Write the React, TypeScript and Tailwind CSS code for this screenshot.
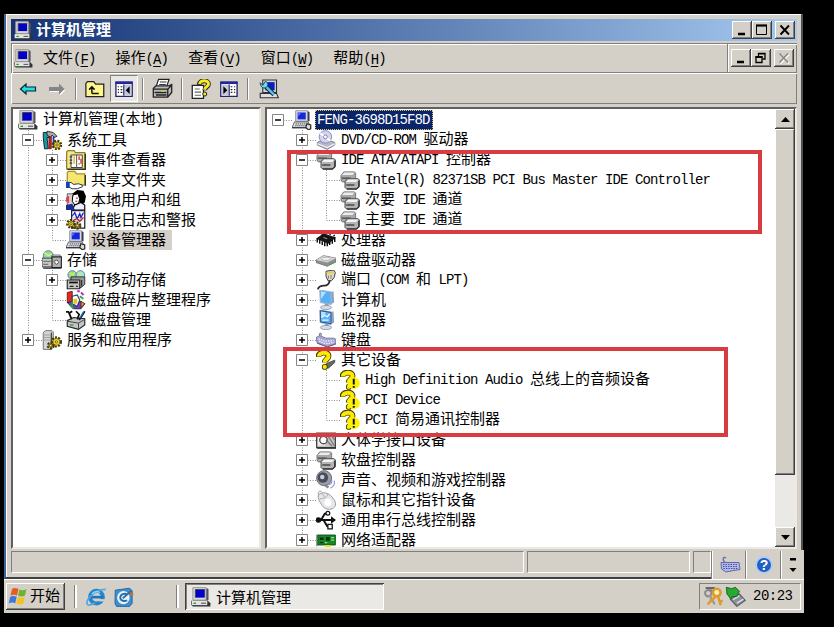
import React from 'react';
import { clsx } from 'clsx';

type Guide = 'blank' | 'line' | 'tee' | 'end' | 'plus' | 'plusEnd' | 'minus' | 'root';

interface TreeItem {
  guides: Guide[];
  icon: React.ReactNode;
  label: string;
  state?: 'selected' | 'inactive';
}

/* ---------- Text ---------- */

// Latin runs use a half-width cell, Chinese characters a full one
function Label({ text, bold }: { text: string; bold?: boolean }) {
  const runs = text.match(/[\x20-\x7e]+|[^\x20-\x7e]+/g) || [];
  return (
    <span className={clsx('whitespace-pre leading-5', bold && 'font-bold')}>
      {runs.map((run, i) =>
        run.charCodeAt(0) < 128 ? (
          <span key={i} className="font-['Liberation_Mono',monospace] text-[14px] tracking-[-0.9px]">
            {run}
          </span>
        ) : (
          <span key={i} className="font-['Noto_Sans_CJK_SC',sans-serif] text-[15px]">
            {run}
          </span>
        )
      )}
    </span>
  );
}

/* ---------- Icons ---------- */

function Icon({ children, size = 20 }: { children: React.ReactNode; size?: number }) {
  return (
    <svg width={size} height={size} viewBox="0 0 16 16" className="shrink-0">
      {children}
    </svg>
  );
}

function ComputerIcon({ size }: { size?: number }) {
  return (
    <Icon size={size}>
      <path d="M2 1h11l1 1v8l-1 1H2z" fill="#555" />
      <path d="M1.5.5h10.5v10H1.5z" fill="#d8d8d8" stroke="#999" strokeWidth=".8" />
      <path d="M3.5 2H11v6.5H3.5z" fill="#0000c8" />
      <path d="M3.5 2H11M3.5 2v6.5" stroke="#445" strokeWidth=".8" />
      <path d="M0 11h13.5l2 2v2.5h-14L0 14z" fill="#333" />
      <path d="M.5 11H13v3.5H.5z" fill="#e4e4e4" />
      <path d="M2 13h2" stroke="#0a0" />
      <path d="M8 13h4" stroke="#666" />
    </Icon>
  );
}

function DeviceManagerIcon() {
  return (
    <Icon>
      <path d="M3 1h10l1 1v7H3z" fill="#334" />
      <path d="M3 .5h9.5V9H3z" fill="#d4d8e8" stroke="#888" strokeWidth=".6" />
      <path d="M4.5 2H11v5.5H4.500z" fill="#1428d8" />
      <path d="M5 2.500h2L5 5z" fill="#6c8cff" />
      <path d="M2 9.500h11l2 4.500H0z" fill="#d8d8e0" stroke="#556" strokeWidth=".7" />
      <path d="M3 11h9M2.500 12.500h9" stroke="#777" strokeDasharray="1 .6" />
      <path d="M0 14.300h12" stroke="#223" strokeWidth=".8" />
      <path d="M12 11l3 1v3l-2 .8-2-1.800z" fill="#ddd" stroke="#222" strokeWidth=".9" />
    </Icon>
  );
}

function Gear({ x, y, r = 2.5 }: { x: number; y: number; r?: number }) {
  return (
    <g>
      <circle cx={x} cy={y} r={r + 0.7} fill="none" stroke="#443800" strokeWidth="2" strokeDasharray="1.5 1" />
      <circle cx={x} cy={y} r={r} fill="#f4d820" stroke="#5c4c00" strokeWidth=".6" />
      <circle cx={x} cy={y} r=".9" fill="#fff" stroke="#443800" strokeWidth=".6" />
    </g>
  );
}

function ToolsIcon() {
  return (
    <Icon>
      <path d="M1 2h5v4H4l1 9H2L1 6z" fill="#10a0a0" stroke="#223" strokeWidth=".8" />
      <path d="M4 1l5 1 3 3-2 1-2-2-1 2-3-2z" fill="#aaa" stroke="#222" strokeWidth=".7" />
      <path d="M5.5 5.500h2V15h-2z" fill="#d02020" stroke="#500" strokeWidth=".5" />
      <path d="M8.5 5H10v9H8.500z" fill="#1838b8" />
      <Gear x={12} y={12} />
    </Icon>
  );
}

function EventIcon() {
  return (
    <Icon>
      <path d="M.5 1.500l1-1h5l1 1.500h7.500v13H.5z" fill="#f4e680" stroke="#8c8030" />
      <path d="M15.500 3v12.500H1" fill="none" stroke="#332" />
      <path d="M4 4h9v10H4z" fill="#fff" stroke="#444" strokeWidth=".8" />
      <path d="M8.500 4v10" stroke="#555" strokeWidth=".8" />
      <path d="M3 5.500h2M3 8h2M3 10.500h2" stroke="#333" />
      <path d="M6.500 5v6" stroke="#c8b400" />
      <path d="M10.500 5v3M12 7v4M10 11h1" stroke="#d02020" />
    </Icon>
  );
}

function ShareIcon() {
  return (
    <Icon>
      <path d="M1 2l1-1h5l1.500 2H15v9H1z" fill="#f6e670" stroke="#a09030" />
      <path d="M15.500 4v8.500" stroke="#332" />
      <path d="M0 10h4l2 1.500 4-.5 3 1v1.500l-4 1.500H5L3 14H0z" fill="#fff" stroke="#335" strokeWidth=".8" />
      <path d="M0 9.500h3V14H0z" fill="#1040c0" />
    </Icon>
  );
}

function UsersIcon() {
  return (
    <Icon>
      <path d="M1 3h6v10H1z" fill="#d8d0c8" stroke="#555" strokeWidth=".7" />
      <path d="M0 6l2.500-1.500v6L0 9z" fill="#e04060" />
      <path d="M5 3l4-3 5 .5L16 5l-1 5-3 2-2-4-2-2z" fill="#000" />
      <path d="M5.500 4l4-1 1.500 4-1 4-3 1L5 9z" fill="#fff" stroke="#000" strokeWidth=".8" />
      <path d="M7 12l5-2 3 2v4H5z" fill="#eef" stroke="#000" strokeWidth=".9" />
      <path d="M0 12l5-1 2 5H0z" fill="#1a2c90" />
      <path d="M8 6.500h1.500M7.500 9h1.500" stroke="#a02020" strokeWidth=".8" />
    </Icon>
  );
}

function PerfIcon() {
  return (
    <Icon>
      <path d="M4.500.5H15v14H4.500z" fill="#fff" stroke="#223" />
      <path d="M5 3.500h9M5 6h9M5 8.500h9M7.500 1v13M11 1v13" stroke="#b8c0d8" strokeWidth=".6" />
      <path d="M5 5l2-3 2 5 2-4 1 3 2-4" fill="none" stroke="#2020c0" />
      <path d="M6 8l3-1 2 2 3-3" fill="none" stroke="#c02020" />
      <Gear x={4} y={11} r={2.200} />
      <Gear x={9} y={12.500} r={1.600} />
    </Icon>
  );
}

function StorageIcon() {
  return (
    <Icon>
      <circle cx="5" cy="4.500" r="4" fill="#8edc9c" stroke="#468" strokeWidth=".6" />
      <path d="M2 2l3 2.500L8 3" stroke="#e8f480" fill="none" />
      <path d="M8 4h6.500v3H8z" fill="#ddd" stroke="#666" strokeWidth=".7" />
      <path d="M0 6.500h9v7H0z" fill="#c8c8c8" stroke="#444" strokeWidth=".8" />
      <path d="M8 5.500h7.500V14H8z" fill="#b0b0b0" stroke="#222" strokeWidth=".9" />
      <path d="M9.500 9l2.500-1 1.500 2-2 1.500z" fill="#fff" stroke="#333" strokeWidth=".6" />
      <path d="M1 9h6M1 11.500h4" stroke="#777" />
      <path d="M1 14.500h14.500" stroke="#222" />
    </Icon>
  );
}

function RemovableIcon() {
  return (
    <Icon>
      <circle cx="5" cy="4" r="3.500" fill="#8edc9c" stroke="#468" strokeWidth=".6" />
      <circle cx="11.500" cy="4" r="3.500" fill="#9ce8d8" stroke="#468" strokeWidth=".6" />
      <path d="M3 2l2 2 2-2M10 2l2 2" stroke="#e8e840" fill="none" />
      <path d="M4 5.500h11v6L12 14H4z" fill="#999" stroke="#333" strokeWidth=".8" />
      <path d="M1 8h10v7H1z" fill="#c4c4c4" stroke="#222" strokeWidth=".9" />
      <path d="M2.500 10h7" stroke="#111" strokeWidth="1.400" />
      <path d="M3 13h3M8 13h1.500" stroke="#222" />
      <path d="M12.500 8v5" stroke="#333" />
    </Icon>
  );
}

function DefragIcon() {
  return (
    <Icon>
      <path d="M1 2l4-1v11l-4-2z" fill="#e02828" stroke="#600" strokeWidth=".6" />
      <path d="M1 10l5 5h6l3-4-4-2H5z" fill="#7838c0" stroke="#223" strokeWidth=".7" />
      <path d="M5 5l4-1 2 4-2 5-4-2z" fill="#fff" stroke="#246" strokeWidth=".9" />
      <path d="M6 7h3v4H6z" fill="#f0c020" />
      <path d="M3 12l3 3M5 9v5" stroke="#20a840" strokeWidth="1.300" />
      <path d="M9 1h2M12 2l2 2" stroke="#c020c0" strokeWidth="1.500" />
      <path d="M11 5l3 2" stroke="#20b040" strokeWidth="1.500" />
      <path d="M12 9l3 2-3 3z" fill="#d8a020" stroke="#421" strokeWidth=".6" />
    </Icon>
  );
}

function DiskMgmtIcon() {
  return (
    <Icon>
      <path d="M1 8.500L6 6l9 1v5l-5 3.500L1 13z" fill="#c4c4c4" stroke="#222" strokeWidth=".9" />
      <path d="M1 9l9 1.500 5-3M10 10.500V15" stroke="#444" fill="none" strokeWidth=".8" />
      <path d="M0 1.500h2.500M5 1L2.500 2.500l2 5" stroke="#111" strokeWidth="1.500" fill="none" />
      <path d="M8 1l2.500 2.500L9 7.500M15 1l-2.500 4-2 3" stroke="#111" strokeWidth="1.400" fill="none" />
      <path d="M14 1.500l-3 5" stroke="#1870d0" />
      <path d="M3 12h3" stroke="#18a030" />
    </Icon>
  );
}

function ServicesIcon() {
  return (
    <Icon>
      <path d="M1 2L3 .5h5l1 1V14l-2 1.500H1z" fill="#d4d4d4" stroke="#777" strokeWidth=".8" />
      <path d="M1.500 4H7M1.500 6H7M1.500 8H7" stroke="#999" strokeWidth=".7" />
      <path d="M7.500 2v13" stroke="#444" />
      <Gear x={11.500} y={9.500} r={2.800} />
      <Gear x={7} y={12.500} r={1.500} />
    </Icon>
  );
}

function DvdIcon() {
  return (
    <Icon>
      <path d="M1 10l6-3 8 3v2l-6 3.500L1 12z" fill="#b4b8c8" stroke="#667" strokeWidth=".6" />
      <circle cx="7.500" cy="5.500" r="5" fill="#d4d4ee" stroke="#8080b0" strokeWidth=".7" />
      <path d="M7.500 5.500l-4-3M7.500 5.500l4 3" stroke="#fff" strokeWidth="1.500" />
      <circle cx="7.500" cy="5.500" r="1.500" fill="#fff" stroke="#668" strokeWidth=".6" />
      <path d="M1 11l8 3 6-3" stroke="#f4f4f8" fill="none" />
    </Icon>
  );
}

function ControllerIcon() {
  return (
    <Icon>
      <path d="M.8 4.500L3 1.500h8.500l1 1V8l-2 1.500H2L.8 8.500z" fill="#a8a8a8" stroke="#6c6c6c" strokeWidth=".7" />
      <path d="M1.500 4l2-2h8l-1.500 2z" fill="#ececec" />
      <path d="M1.500 6.500h7" stroke="#444" />
      <path d="M4 9.500l2-2.500h8.500l1 1v5l-2 2H5l-1-1z" fill="#b4b4b4" stroke="#4c4c4c" strokeWidth=".8" />
      <path d="M4.500 9.500l2-2h8l-1.500 2z" fill="#f4f4f4" />
      <path d="M5 12h6.500" stroke="#333" />
      <path d="M15 8.500v5l-2 1.800H5.500" stroke="#2c2c2c" strokeWidth=".9" fill="none" />
    </Icon>
  );
}

function CpuIcon() {
  return (
    <Icon>
      <path d="M0 7l6-4.500L16 6l-6 5z" fill="#151515" />
      <path d="M1 7v3M3 8v3M5 9v3M7 9.500v3.500M9 10v3M11 9.500V12M13 8v3M15 6v3.500" stroke="#000" strokeWidth="1.100" />
      <path d="M5 3.500l-1-1M8 3l-1-1M11 4l1-1.500M14 5l1-1" stroke="#000" />
      <path d="M6 6l3 1" stroke="#999" strokeWidth=".8" />
    </Icon>
  );
}

function DiskIcon() {
  return (
    <Icon>
      <path d="M0 8l6-3.500 10 2v3L9 13l-9-3z" fill="#909090" stroke="#666" strokeWidth=".6" />
      <path d="M0 8l6-3.500 10 2L9 10z" fill="#d4d4d4" />
      <ellipse cx="8" cy="7" rx="3.500" ry="1.300" fill="#f4f4f4" stroke="#999" strokeWidth=".5" />
      <path d="M11 11l2-1" stroke="#30c030" />
    </Icon>
  );
}

function PortIcon() {
  return (
    <Icon>
      <path d="M8 1l6-1 1.500 2-1 4-2 2.500h-3L8 5z" fill="#d8d8d0" stroke="#444" strokeWidth=".8" />
      <path d="M8.500 2.500l6-.8" stroke="#e8d040" strokeWidth="1.600" />
      <path d="M10 4.500V7M12 4v3" stroke="#777" strokeWidth=".7" />
      <path d="M11 8.500c-.5 3-2 4-4.500 4S2 13 1.500 15.500" fill="none" stroke="#2c2c2c" strokeWidth="1.500" />
    </Icon>
  );
}

function MonitorIcon({ framed }: { framed?: boolean }) {
  return (
    <Icon>
      <path d="M11 2l3-1 .5 9-3 1.500z" fill="#8aa4c4" />
      <path d="M3 0l9 1.500v10L3.500 10z" fill="#56b0f8" stroke="#a0b4d0" strokeWidth=".9" />
      <path d="M4 1l4 1-4 5z" fill="#b4e0ff" />
      {framed && <path d="M5 6l2-2 2 1.500L11 3M5 8h5" stroke="#e8faff" fill="none" />}
      {framed && <path d="M3.500.5L12 2v9L3.500 9.500z" stroke="#2a5488" fill="none" strokeWidth=".8" />}
      <path d="M7 11h3v2H7z" fill="#91a0b8" />
      <ellipse cx="8" cy="14" rx="4.500" ry="1.700" fill="#d4dae6" stroke="#8890a4" strokeWidth=".6" />
    </Icon>
  );
}

function KeyboardIcon() {
  return (
    <Icon>
      <path d="M3 5C2 2 5 2 4 4.500" stroke="#7c7ca4" fill="none" />
      <path d="M0 6l3-1.500L8 6.500h6l2 1v3.500L9 13.500 1 10.500z" fill="#a8a8d4" stroke="#7070a0" strokeWidth=".7" />
      <path d="M2 7l5 2 7-.5M2.500 9l5 2 7-1" stroke="#f0f0ff" fill="none" strokeDasharray="1.200 .8" />
      <path d="M1 10.500l8 3 7-2.500" stroke="#606090" fill="none" strokeWidth=".8" />
    </Icon>
  );
}

function LayoutIcon() {
  return (
    <svg width="21" height="20" viewBox="0 0 21 20">
      <path d="M5 7C2 5 3 1 6 3" stroke="#6c70a8" fill="none" strokeWidth="1.400" />
      <path d="M1 7.500h18l1 7-9 1.500-5 1-4.500-3z" fill="#b0b8ec" stroke="#6468a8" />
      <path d="M3 9.500h15M3 11.500h15M3.500 13.500h14" stroke="#4c5498" strokeDasharray="1.500 1" />
    </svg>
  );
}

function UnknownIcon({ warn }: { warn?: boolean }) {
  return (
    <Icon>
      {!warn && <path d="M8 11l7-3v2l-5 4.500H6z" fill="#666" stroke="#333" strokeWidth=".5" />}
      <path d="M1.800 5.500C1.800 1.200 10 .8 10 4.800c0 2.700-3 2.400-3 5.200" fill="none" stroke="#3c3800" strokeWidth="4.600" />
      <circle cx="7" cy="13.500" r="2.300" fill="#3c3800" />
      <path d="M2.300 5.200C2.300 1.500 10 1 10 4.800c0 2.700-3 2.400-3 5.200" fill="none" stroke="#ffe800" strokeWidth="3.300" />
      <circle cx="7" cy="13.500" r="1.700" fill="#ffe800" />
      {warn && (
        <g>
          <circle cx="11" cy="10.500" r="4.800" fill="#fff200" />
          <path d="M11 7v4.500M11 12.700v1.500" stroke="#111" strokeWidth="1.600" />
        </g>
      )}
    </Icon>
  );
}

function HidIcon() {
  return (
    <Icon>
      <path d="M.5 2.500h15V14H.5z" fill="#c4c4c4" stroke="#444" />
      <path d="M1.500 3.500h6v9h-6z" fill="#eee" />
      <circle cx="6" cy="8" r="3" fill="#fff" stroke="#444" />
      <path d="M9 4l6 9M12 4l3 4M8 8l5 5" stroke="#777" />
      <path d="M1 5l2-1" stroke="#d03030" />
      <path d="M1 14.500h15" stroke="#222" />
    </Icon>
  );
}

function SoundIcon() {
  return (
    <Icon>
      <ellipse cx="6.500" cy="6.500" rx="6" ry="6" fill="#9aa0ac" stroke="#5c606c" strokeWidth=".7" />
      <circle cx="5.500" cy="6" r="4.200" fill="#464c58" />
      <circle cx="5" cy="5.500" r="1.800" fill="#c8ccd8" />
      <path d="M7 12l3 2" stroke="#888" strokeWidth="2" />
      <path d="M10 12c2-.5 3-2 2.500-4M11.500 14.500c2.500-1 4-3.500 3-6" fill="none" stroke="#9090e0" strokeWidth=".9" />
    </Icon>
  );
}

function MouseIcon() {
  return (
    <Icon>
      <path d="M2 4C1 1 4 0 5 2" stroke="#999" fill="none" strokeWidth=".8" />
      <path d="M3 3c4-2 8 0 11 4s1.500 7-1 8-6 .5-8-2.500S0 5 3 3z" fill="#e6e6ea" stroke="#9a9aa6" strokeWidth=".8" />
      <path d="M3 7c3 0 6-1 6.500-4M5 3l2 3" stroke="#aaa" fill="none" strokeWidth=".7" />
      <ellipse cx="9.500" cy="10" rx="2.800" ry="3" fill="#fff" />
    </Icon>
  );
}

function UsbIcon() {
  return (
    <Icon>
      <path d="M1 8h12M4 8l3-5h2M6 8l3 5h2" stroke="#111" strokeWidth="1.500" fill="none" />
      <path d="M12 5l4 3-4 3z" fill="#111" />
      <circle cx="2" cy="8" r="2.200" fill="#111" />
      <circle cx="9.500" cy="2.500" r="1.500" fill="#fff" stroke="#111" />
      <path d="M9.500 11.500H13v3.500H9.500z" fill="#fff" stroke="#111" />
    </Icon>
  );
}

function NetworkIcon() {
  return (
    <Icon>
      <path d="M0 3.500h1.500V13H0z" fill="#999" />
      <path d="M1.500 4h14v8h-14z" fill="#158828" stroke="#0a4c14" strokeWidth=".7" />
      <path d="M3 6h3v2H3zM8 5.500h3v3H8zM3 9.500h3v1H3z" fill="#0c2c10" />
      <path d="M12 6h2.500M12 8h2.500M7 10h2" stroke="#90e070" />
      <path d="M7 12h5v1.500H7z" fill="#e0e020" />
    </Icon>
  );
}

function BackIcon() {
  return (
    <svg width="18" height="16" viewBox="0 0 18 16">
      <path d="M1.500 8L7 3v3h9.500v4H7v3z" fill="#20e0e8" stroke="#06262a" strokeWidth="1.200" />
    </svg>
  );
}

function ForwardIcon() {
  return (
    <svg width="18" height="16" viewBox="0 0 18 16">
      <path d="M17.500 9L12 14.500V11H2V9z" fill="#fff" />
      <path d="M16.500 8L11 2.500V6H1v4h10v3.500z" fill="#858585" />
    </svg>
  );
}

function FolderUpIcon() {
  return (
    <Icon>
      <path d="M.7 14V3.500L2 2h5l1.500 2H15v10z" fill="#fff68c" stroke="#222" />
      <path d="M5.500 11.500H11M5.500 11.500V7M3.300 8.500l2.200-2.200 2.200 2.200" fill="none" stroke="#111" strokeWidth="1.200" />
    </Icon>
  );
}

function PaneIcon({ mirrored }: { mirrored?: boolean }) {
  return (
    <Icon size={18}>
      <g transform={mirrored ? 'translate(16 0) scale(-1 1)' : undefined}>
        <path d="M.8 2h14.500v12.500H.8z" fill="#fff" stroke="#24246c" strokeWidth="1.200" />
        <path d="M.5 2.500h15" stroke="#24249c" strokeWidth="2.200" />
        <path d="M8 4h6.500v10H8z" fill="#c6c8dc" />
        <path d="M7.800 4v10" stroke="#24246c" />
        <path d="M2.500 6h1M5 6h1.500M2.500 8.500h1M5 8.500h1.500M2.500 11h1M5 11h1.500" stroke="#222" strokeWidth="1.100" />
        <path d="M13 5.500v7L9.500 9z" fill="#000" />
      </g>
    </Icon>
  );
}

function PrinterIcon() {
  return (
    <Icon size={21}>
      <path d="M5 1h8l-2 6H3z" fill="#fff" stroke="#222" strokeWidth=".9" />
      <path d="M6 3h5M5.500 5h5" stroke="#333" strokeWidth=".8" />
      <path d="M1 8l2-2h10l2-1v6l-3 3.500H1z" fill="#bbb" stroke="#222" />
      <path d="M1 8.500h11l3-3M12 8.500v6" stroke="#222" fill="none" />
      <path d="M2 11h9M3 13h8" stroke="#222" strokeWidth="1.200" />
      <path d="M7 10h3" stroke="#d8d020" />
    </Icon>
  );
}

function HelpDocIcon() {
  return (
    <Icon>
      <path d="M1 5h9v10.500H1z" fill="#fff" stroke="#222" />
      <path d="M3 8h4M3 10.500h5M3 13h5" stroke="#666" strokeWidth=".9" />
      <path d="M6.500 4.500C6.500.5 14 .5 14 4c0 2.500-3 2-3 5" fill="none" stroke="#222" strokeWidth="3.800" />
      <path d="M7 4C7 .5 14 .5 14 4c0 2.500-3 2-3 4.500" fill="none" stroke="#f8ec20" strokeWidth="2.400" />
      <circle cx="11" cy="12" r="1.600" fill="#f8ec20" stroke="#222" strokeWidth=".8" />
    </Icon>
  );
}

function ScanIcon() {
  return (
    <Icon>
      <path d="M3 .8h11v10H3z" fill="#d8d8d8" stroke="#333" strokeWidth=".9" />
      <path d="M5 2.500h7.500V9H5z" fill="#0820c0" />
      <path d="M1 11.500h13l1.500 3.500H1z" fill="#e0e0e0" stroke="#333" strokeWidth=".9" />
      <path d="M4 4.500l8 8" stroke="#123" strokeWidth="3.400" />
      <path d="M4 4.500l8 8" stroke="#50c8e8" strokeWidth="2" />
      <path d="M1 3l2 2 2-3c2 0 3 3 1 4.500S1 7 1 3z" fill="#70d8f0" stroke="#134" strokeWidth=".7" />
    </Icon>
  );
}

function WindowsFlag() {
  return (
    <svg width="21" height="19" viewBox="0 0 21 19">
      <path d="M4 2c2-1.500 4-1 6.500 0L9 8.500c-2-1-4-1-6.500 0z" fill="#e85a24" />
      <path d="M11.500 2.500c2 1 4.500 1 7-.5L17 8.500c-2.500 1.300-5 1-7 .2z" fill="#6cb42c" />
      <path d="M2.200 9.800c2-1.200 4.500-1 6.500 0l-1.500 6.500c-2-1-4.500-1-6.500 0z" fill="#3c78dc" />
      <path d="M9.800 10.200c2 .9 4.500 1.100 7-.2l-1.500 6.500c-2.500 1.400-5 1-7 .2z" fill="#f4c41c" />
    </svg>
  );
}

function IeIcon() {
  return (
    <Icon size={21}>
      <circle cx="8" cy="8.500" r="4.900" fill="none" stroke="#2486cc" strokeWidth="3" />
      <path d="M4 8.500h9" stroke="#1e74c0" strokeWidth="2" />
      <path d="M10 10h5v1.800h-5z" fill="#d4d0c8" />
      <path d="M1 14C-.5 11 6 2.500 15 2.500M1 14c1 1.500 4 0 6-1" fill="none" stroke="#4ca8e0" strokeWidth="1.300" />
      <path d="M4.500 6c2-2 4-2 6-1" stroke="#9cdcf8" fill="none" strokeWidth=".9" />
    </Icon>
  );
}

function DesktopIcon() {
  return (
    <Icon size={20}>
      <path d="M1 2.500L12.500 1l2 2v10l-2 2.500H2L.8 13z" fill="#3c90d0" stroke="#205c98" strokeWidth=".7" />
      <ellipse cx="7.500" cy="8.500" rx="5" ry="5.300" fill="#e8f4fc" />
      <path d="M10.500 6c-2-1.500-5.500 0-5.500 2.500s3.500 3.500 5.500 2" fill="none" stroke="#2470b4" strokeWidth="1.500" />
      <path d="M7 9l7-6" stroke="#3a6a98" strokeWidth="1.400" />
      <path d="M13 4l3 1.500L13 7.500z" fill="#d86828" />
    </Icon>
  );
}

function KeysIcon() {
  return (
    <Icon size={21}>
      <path d="M2 1.500h7M4 3l5 1" stroke="#666" strokeWidth="1.500" />
      <circle cx="4" cy="5.500" r="2.400" fill="none" stroke="#8c8c90" strokeWidth="1.600" />
      <path d="M5 7l4 7M5 11l3-1" stroke="#98989c" strokeWidth="1.600" />
      <circle cx="10.500" cy="5" r="2.900" fill="#fff0c0" stroke="#e09c28" strokeWidth="2" />
      <path d="M9.500 8l-6 6M11.500 8l2 6.500M13 12l2-.8" stroke="#e09c28" strokeWidth="1.900" />
    </Icon>
  );
}

function SafeRemoveIcon() {
  return (
    <Icon size={21}>
      <path d="M4 10l7-4 4.500 5L9 15.500z" fill="#8c9098" stroke="#50545c" strokeWidth=".8" />
      <path d="M6 10.500l5-3M9 13l5-3" stroke="#dce0e8" />
      <path d="M1 1l4 1 3-1 3 3-2 4H5.500l-1 2L1.500 6z" fill="#28a830" stroke="#146418" strokeWidth=".7" />
    </Icon>
  );
}

function HelpIcon() {
  return (
    <span className="flex size-[18px] items-center justify-center rounded-full border-2 border-[#b4ccf0] bg-[#2060c4] font-['Liberation_Sans',sans-serif] text-[14px] leading-none font-bold text-white">
      ?
    </span>
  );
}

/* ---------- Tree ---------- */

function GuideCell({ kind }: { kind: Guide }) {
  const hasBox = kind === 'plus' || kind === 'plusEnd' || kind === 'minus' || kind === 'root';
  const up = kind !== 'blank' && kind !== 'root';
  const down = kind === 'line' || kind === 'tee' || kind === 'plus' || kind === 'minus';
  const across = kind !== 'blank' && kind !== 'line';
  return (
    <svg width="24" height="20" className="shrink-0">
      <g stroke="#8a8a8a" strokeDasharray="1 1.5">
        {up && <path d="M10.5 0v10" />}
        {down && <path d="M10.5 10v10" />}
        {across && <path d="M10.5 10.500H24" />}
      </g>
      {hasBox && (
        <g>
          <path d="M4.500 4.500h11v11h-11z" fill="#fff" stroke="#858585" />
          <path d="M7 10h6" stroke="#000" strokeWidth="1.500" />
          {(kind === 'plus' || kind === 'plusEnd') && <path d="M10 7v6" stroke="#000" strokeWidth="1.500" />}
        </g>
      )}
    </svg>
  );
}

function TreeRow({ guides, icon, label, state }: TreeItem) {
  return (
    <div className="flex h-5 shrink-0 items-center">
      {guides.map((kind, i) => (
        <GuideCell key={i} kind={kind} />
      ))}
      {icon}
      <span
        className={clsx(
          'ml-[3px] flex h-5 items-center pb-0.5 pl-0.5',
          state === 'selected' && 'bg-[#0a246a] pr-[3px] text-white outline-1 -outline-offset-1 outline-dotted outline-[#d8c878]',
          state === 'inactive' && 'bg-[#d4d0c8] pr-[6px]'
        )}
      >
        <Label text={label} />
      </span>
    </div>
  );
}

const consoleTree: TreeItem[] = [
  { guides: [], icon: <ComputerIcon />, label: '计算机管理(本地)' },
  { guides: ['minus'], icon: <ToolsIcon />, label: '系统工具' },
  { guides: ['line', 'plus'], icon: <EventIcon />, label: '事件查看器' },
  { guides: ['line', 'plus'], icon: <ShareIcon />, label: '共享文件夹' },
  { guides: ['line', 'plus'], icon: <UsersIcon />, label: '本地用户和组' },
  { guides: ['line', 'plus'], icon: <PerfIcon />, label: '性能日志和警报' },
  { guides: ['line', 'end'], icon: <DeviceManagerIcon />, label: '设备管理器', state: 'inactive' },
  { guides: ['minus'], icon: <StorageIcon />, label: '存储' },
  { guides: ['line', 'plus'], icon: <RemovableIcon />, label: '可移动存储' },
  { guides: ['line', 'tee'], icon: <DefragIcon />, label: '磁盘碎片整理程序' },
  { guides: ['line', 'end'], icon: <DiskMgmtIcon />, label: '磁盘管理' },
  { guides: ['plusEnd'], icon: <ServicesIcon />, label: '服务和应用程序' },
];

const deviceTree: TreeItem[] = [
  { guides: ['root'], icon: <DeviceManagerIcon />, label: 'FENG-3698D15F8D', state: 'selected' },
  { guides: ['blank', 'plus'], icon: <DvdIcon />, label: 'DVD/CD-ROM 驱动器' },
  { guides: ['blank', 'minus'], icon: <ControllerIcon />, label: 'IDE ATA/ATAPI 控制器' },
  { guides: ['blank', 'line', 'tee'], icon: <ControllerIcon />, label: 'Intel(R) 82371SB PCI Bus Master IDE Controller' },
  { guides: ['blank', 'line', 'tee'], icon: <ControllerIcon />, label: '次要 IDE 通道' },
  { guides: ['blank', 'line', 'end'], icon: <ControllerIcon />, label: '主要 IDE 通道' },
  { guides: ['blank', 'plus'], icon: <CpuIcon />, label: '处理器' },
  { guides: ['blank', 'plus'], icon: <DiskIcon />, label: '磁盘驱动器' },
  { guides: ['blank', 'plus'], icon: <PortIcon />, label: '端口 (COM 和 LPT)' },
  { guides: ['blank', 'plus'], icon: <MonitorIcon />, label: '计算机' },
  { guides: ['blank', 'plus'], icon: <MonitorIcon framed />, label: '监视器' },
  { guides: ['blank', 'plus'], icon: <KeyboardIcon />, label: '键盘' },
  { guides: ['blank', 'minus'], icon: <UnknownIcon />, label: '其它设备' },
  { guides: ['blank', 'line', 'tee'], icon: <UnknownIcon warn />, label: 'High Definition Audio 总线上的音频设备' },
  { guides: ['blank', 'line', 'tee'], icon: <UnknownIcon warn />, label: 'PCI Device' },
  { guides: ['blank', 'line', 'end'], icon: <UnknownIcon warn />, label: 'PCI 简易通讯控制器' },
  { guides: ['blank', 'plus'], icon: <HidIcon />, label: '人体学接口设备' },
  { guides: ['blank', 'plus'], icon: <ControllerIcon />, label: '软盘控制器' },
  { guides: ['blank', 'plus'], icon: <SoundIcon />, label: '声音、视频和游戏控制器' },
  { guides: ['blank', 'plus'], icon: <MouseIcon />, label: '鼠标和其它指针设备' },
  { guides: ['blank', 'plus'], icon: <UsbIcon />, label: '通用串行总线控制器' },
  { guides: ['blank', 'plusEnd'], icon: <NetworkIcon />, label: '网络适配器' },
];

/* ---------- Chrome ---------- */

const raised =
  'bg-[#d4d0c8] shadow-[inset_-1px_-1px_#404040,inset_1px_1px_#fff,inset_-2px_-2px_#808080]';
const sunken = 'border border-t-[#808080] border-l-[#808080] border-r-white border-b-white';

type Glyph = 'minimize' | 'maximize' | 'restore' | 'close' | 'closeOff';

function CaptionButton({ glyph, className }: { glyph: Glyph; className?: string }) {
  return (
    <button className={clsx('flex h-[18px] w-5 items-center justify-center', raised, className)}>
      <svg width="14" height="12" viewBox="0 0 14 12" fill="none" stroke="#000">
        {glyph === 'minimize' && <path d="M3 10h7" strokeWidth="2.5" />}
        {glyph === 'maximize' && (
          <g>
            <path d="M1.500 1.500h10v9h-10z" />
            <path d="M1 1.500h11" strokeWidth="2.200" />
          </g>
        )}
        {glyph === 'restore' && (
          <g strokeWidth="1.300">
            <path d="M4.500 4V1.500H11V7H8.500M4 1.800h7" />
            <path d="M2 5h6v5.500H2z" />
            <path d="M1.500 5h7" strokeWidth="2" />
          </g>
        )}
        {glyph === 'close' && <path d="M2.500 1.500l8.500 9M11 1.500l-8.500 9" strokeWidth="1.900" />}
        {glyph === 'closeOff' && (
          <g strokeWidth="1.500">
            <path d="M3.500 2.500l8.500 9M12 2.500l-8.500 9" stroke="#fff" />
            <path d="M2.500 1.500l8.500 9M11 1.500l-8.500 9" stroke="#848484" />
          </g>
        )}
      </svg>
    </button>
  );
}

function TitleBar() {
  return (
    <div className="flex h-[22px] items-center bg-linear-to-r from-[#163274] to-[#a6caf0] pr-0.5 pl-[3px] text-white">
      <ComputerIcon size={19} />
      <h1 className="ml-[3px] flex flex-1 items-center pb-0.5">
        <Label text="计算机管理" bold />
      </h1>
      <CaptionButton glyph="minimize" />
      <CaptionButton glyph="maximize" />
      <CaptionButton glyph="close" className="ml-[3px]" />
    </div>
  );
}

const menus = [
  ['文件', 'F'],
  ['操作', 'A'],
  ['查看', 'V'],
  ['窗口', 'W'],
  ['帮助', 'H'],
];

function MenuBar() {
  return (
    <div className="mt-0.5 flex h-[30px] shadow-[inset_1px_1px_#808080,inset_2px_2px_#fff,inset_-1px_-1px_#808080]">
      <div className="flex flex-1 items-center gap-5 pl-[3px]">
        <ComputerIcon size={19} />
        {menus.map(([name, key], i) => (
          <button key={key} className={clsx('flex items-center', i === 0 && '-ml-[10px]')}>
            <Label text={`${name}(`} />
            <span className="underline underline-offset-2">
              <Label text={key} />
            </span>
            <Label text=")" />
          </button>
        ))}
      </div>
      <div className="my-px flex w-[70px] items-center border-l border-[#808080] pl-[3px] shadow-[inset_1px_0_#fff]">
        <CaptionButton glyph="minimize" />
        <CaptionButton glyph="restore" />
        <CaptionButton glyph="closeOff" className="ml-[3px]" />
      </div>
    </div>
  );
}

function Separator({ className }: { className?: string }) {
  return <div className={clsx('w-0.5 shrink-0 border-l border-[#808080] bg-white', className)} />;
}

function Toolbar() {
  return (
    <div className="flex h-[31px] items-center pl-2 shadow-[inset_1px_1px_#fff,inset_0_-1px_#808080,inset_-1px_0_#808080]">
      <BackIcon />
      <span className="ml-[11px]">
        <ForwardIcon />
      </span>
      <Separator className="ml-[9px] h-[22px]" />
      <span className="ml-2">
        <FolderUpIcon />
      </span>
      <span className="ml-[5px] flex h-[27px] w-7 items-center justify-center border border-t-[#808080] border-l-[#808080] border-r-white border-b-white bg-[#e9e7e3]">
        <PaneIcon />
      </span>
      <Separator className="ml-1 h-[22px]" />
      <span className="ml-2">
        <PrinterIcon />
      </span>
      <Separator className="ml-2 h-[22px]" />
      <span className="ml-2">
        <HelpDocIcon />
      </span>
      <span className="ml-[9px]">
        <PaneIcon mirrored />
      </span>
      <Separator className="ml-[9px] h-[22px]" />
      <span className="ml-[10px]">
        <ScanIcon />
      </span>
    </div>
  );
}

function ScrollButton({ down }: { down?: boolean }) {
  return (
    <button className={clsx('flex h-5 w-5 shrink-0 items-center justify-center', raised)}>
      <svg width="9" height="5" viewBox="0 0 9 5">
        <path d={down ? 'M0 0h9L4.500 5z' : 'M0 5h9L4.500 0z'} />
      </svg>
    </button>
  );
}

function Pane({ children, className }: { children: React.ReactNode; className?: string }) {
  return (
    <div
      className={clsx(
        'flex overflow-hidden border-2 border-t-[#606060] border-r-[#ece9e4] border-b-[#ece9e4] border-l-[#606060] bg-white',
        className
      )}
    >
      {children}
    </div>
  );
}

function StatusBar() {
  return (
    <div className="mt-0.5 flex h-[22px] gap-[3px]">
      <div className={clsx('w-[513px]', sunken)} />
      <div className={clsx('w-[163px]', sunken)} />
      <div className={clsx('w-[18px]', sunken)} />
    </div>
  );
}

function LanguageBar() {
  return (
    <div className="absolute top-[550px] left-[711px] flex h-[29px] w-[93px] items-center bg-[#d4d0c8]">
      <Separator className="h-[28px]" />
      <span className="ml-[7px]">
        <LayoutIcon />
      </span>
      <Separator className="ml-1 h-[28px]" />
      <span className="ml-2">
        <HelpIcon />
      </span>
      <Separator className="ml-[7px] h-[28px]" />
      <svg width="8" height="16" viewBox="0 0 8 16" className="ml-[7px]">
        <path d="M1 1h6v2.500H1zM.5 11h7L4 15z" />
      </svg>
    </div>
  );
}

function Taskbar() {
  return (
    <div className="flex h-[34px] w-[800px] items-center border-t border-white bg-[#d4d0c8] pl-0.5">
      <button className={clsx('flex h-[27px] w-[59px] items-center pl-0.5', raised)}>
        <WindowsFlag />
        <span className="ml-px pb-1">
          <Label text="开始" />
        </span>
      </button>
      <Separator className="ml-[9px] h-[23px] w-[3px]" />
      <span className="ml-[9px]">
        <IeIcon />
      </span>
      <span className="ml-[7px]">
        <DesktopIcon />
      </span>
      <Separator className="ml-[42px] h-[23px] w-[3px]" />
      <button className="ml-[6px] flex h-[27px] w-[199px] items-center bg-[#ebe9e5] pl-[6px] shadow-[inset_1px_1px_#404040,inset_-1px_-1px_#fff,inset_2px_2px_#808080]">
        <ComputerIcon />
        <span className="ml-[5px]">
          <Label text="计算机管理" />
        </span>
      </button>
      <div className={clsx('mr-[3px] ml-auto flex h-[27px] w-[102px] items-center pl-[3px]', sunken)}>
        <KeysIcon />
        <span className="ml-px">
          <SafeRemoveIcon />
        </span>
        <span className="ml-[7px] font-['Liberation_Mono',monospace] text-[14px] tracking-[-0.5px]">20:23</span>
      </div>
    </div>
  );
}

export default function App() {
  return (
    <div className="relative h-[627px] w-[834px] overflow-hidden bg-black pt-3.5 pl-1 text-black">
      {/* Management console window */}
      <div className="h-[565px] w-[799px] border-r-2 border-b-2 border-l-2 border-r-[#505050] border-b-[#404040] border-l-[#3f6596] bg-[#d4d0c8] pt-[5px] pr-[4px] pl-[5px] shadow-[inset_1px_1px_#fff]">
        <TitleBar />
        <MenuBar />
        <Toolbar />
        <div className="mt-[3px] flex h-[442px] justify-between">
          <Pane className="w-[250px]">
            <div className="flex flex-col pt-px pl-[5px]">
              {consoleTree.map((item) => (
                <TreeRow key={item.label} {...item} />
              ))}
            </div>
          </Pane>
          <Pane className="w-[532px]">
            <div className="flex min-w-0 flex-1 flex-col pt-px pl-px">
              {deviceTree.map((item) => (
                <TreeRow key={item.label} {...item} />
              ))}
            </div>
            <div className="flex w-5 flex-col bg-[#ebe9e5]">
              <ScrollButton />
              <div className={clsx('h-[346px]', raised)} />
              <div className="flex-1" />
              <ScrollButton down />
            </div>
          </Pane>
        </div>
        <StatusBar />
      </div>
      <Taskbar />

      {/* Floating over the window */}
      <LanguageBar />
      <div className="absolute top-[150px] left-[287px] h-[84px] w-[475px] border-4 border-[#d93c40]" />
      <div className="absolute top-[347px] left-[283px] h-[90px] w-[445px] border-4 border-[#d93c40]" />
    </div>
  );
}
